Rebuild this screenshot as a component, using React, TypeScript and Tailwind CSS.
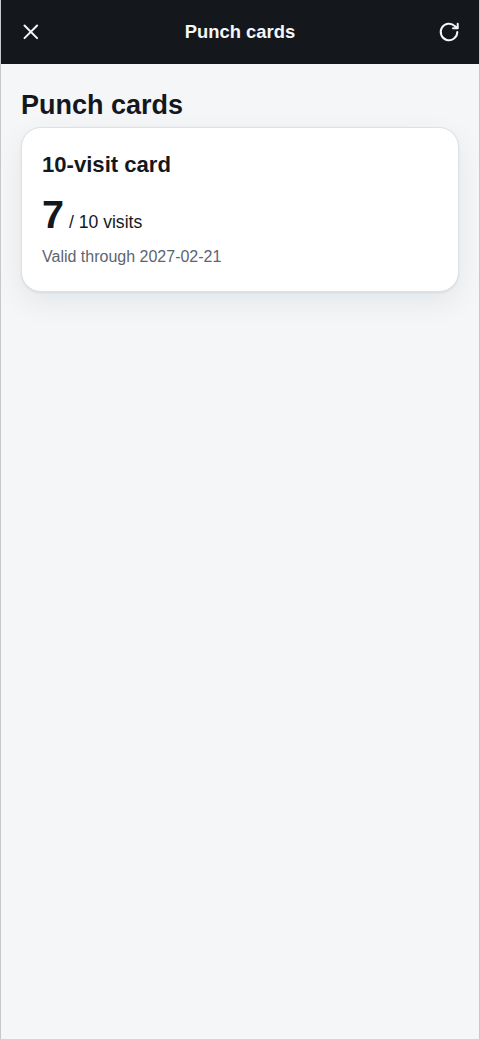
type PunchCardProps = {
  card: {
    title: string;
    remaining: number;
    total: number;
    validThrough: string;
  }
}

function CloseIcon() {
  return (
    <svg className="size-6" viewBox="0 0 24 24" fill="none" stroke="currentColor" strokeWidth="2" strokeLinecap="round">
      <path d="M5.5 5.5l12.6 12.6M18.1 5.5L5.5 18.1" />
    </svg>
  );
}

function RefreshIcon() {
  return (
    <svg className="size-6" viewBox="0 0 24 24" fill="none" stroke="currentColor" strokeWidth="2" strokeLinecap="round" strokeLinejoin="round">
      <path d="M20.3 12a8.3 8.3 0 1 1-2.4-5.9L20.3 8" />
      <path d="M20.7 3.8v4.5h-4.7" />
    </svg>
  );
}

function PunchCard({ card }: PunchCardProps) {
  return (
    <article className="h-[165px] rounded-[20px] border border-[#dce1e8] bg-white px-5 pt-[23px] shadow-[0_1px_2px_rgba(20,24,29,0.08),0_10px_30px_rgba(20,24,29,0.07)]">
      <h2 className="text-[22.1px] leading-[27px] font-bold">{card.title}</h2>
      <p className="mt-[13px] h-[46px] text-[17.6px] leading-[46px]">
        <strong className="text-[39.6px] font-bold">{card.remaining}</strong> / {card.total} visits
      </p>
      <p className="mt-2 text-base leading-6 text-[#5b6572]">Valid through {card.validThrough}</p>
    </article>
  );
}

export default function App() {
  const card = { title: '10-visit card', remaining: 7, total: 10, validThrough: '2027-02-21' };

  return (
    <div className="flex h-[1039px] flex-col border-x border-[#c6c9ce] bg-[#f4f6f8] font-['Liberation_Sans',Arial,sans-serif] text-[#14181d]">
      <header className="-mx-px flex h-16 items-center justify-between border-x border-[#c6c9ce] bg-[#14181d] px-[18px] text-[#f4f6f8]">
        <button type="button" aria-label="Close">
          <CloseIcon />
        </button>
        <span className="text-[18.4px] leading-6 font-bold">Punch cards</span>
        <button type="button" aria-label="Refresh">
          <RefreshIcon />
        </button>
      </header>

      <main className="px-5 pt-6">
        <h1 className="mb-[5px] text-[27px] leading-[34px] font-bold">Punch cards</h1>
        <PunchCard card={card} />
      </main>
    </div>
  );
}
